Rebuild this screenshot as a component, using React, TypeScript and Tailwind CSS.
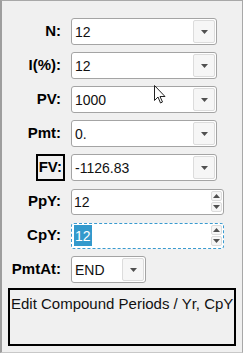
import type { ReactNode } from 'react'

const FONT = { fontFamily: '"Liberation Sans", Arial, sans-serif' }

function Arrow({ up = false }: { up?: boolean }) {
  return (
    <svg width="7" height="4" viewBox="0 0 7 4" className={up ? 'rotate-180' : ''}>
      <path d="M0 0h7L3.5 4z" fill="#505050" />
    </svg>
  )
}

function Combo({ value, width = 'w-[146px]' }: { value: string; width?: string }) {
  return (
    <div
      className={`${width} h-[27px] flex items-center bg-white border border-[#a4a4a4] rounded-[3px] pl-[3px] pr-[1px]`}
    >
      <span className="flex-1 text-[14px] text-[#111] leading-none">{value}</span>
      <div className="w-[22px] h-[23px] flex items-center justify-center bg-[#f6f6f6] border border-[#dcdcdc] rounded-[2px]">
        <Arrow />
      </div>
    </div>
  )
}

function Spinner({ children, focused = false }: { children: ReactNode; focused?: boolean }) {
  return (
    <div
      className={`w-[153px] h-[26px] flex items-center bg-white rounded-[3px] pl-[2px] pr-[1px] ${
        focused ? 'border border-dashed border-[#3a9bd0]' : 'border border-[#a4a4a4]'
      }`}
    >
      <span className="flex-1 text-[14px] text-[#111] leading-none flex items-center h-full">{children}</span>
      <div className="flex flex-col gap-[1px]">
        <div className="w-[11px] h-[10px] flex items-center justify-center bg-[#f6f6f6] border border-[#dcdcdc] rounded-[2px]">
          <Arrow up />
        </div>
        <div className="w-[11px] h-[10px] flex items-center justify-center bg-[#f6f6f6] border border-[#dcdcdc] rounded-[2px]">
          <Arrow />
        </div>
      </div>
    </div>
  )
}

function Row({ label, boxed = false, children }: { label: string; boxed?: boolean; children: ReactNode }) {
  return (
    <div className="flex items-center h-[27px]">
      <div className="w-[65px] flex justify-end">
        {boxed ? (
          <span className="border-2 border-black px-[1px] h-[27px] flex items-center text-[15px] font-bold text-black">
            {label}
          </span>
        ) : (
          <span className="pr-[4px] text-[15px] font-bold text-black">{label}</span>
        )}
      </div>
      <div className="ml-[6px]">{children}</div>
    </div>
  )
}

export default function App() {
  return (
    <div
      style={FONT}
      className="relative w-[243px] h-[353px] bg-[#f0f0f0] border-l-2 border-t border-r border-b border-l-[#9e9e9e] border-t-[#a8a8a8] border-r-[#a8a8a8] border-b-[#c8c8c8] overflow-hidden"
    >
      <div className="flex flex-col gap-[7px] pt-[17px] -ml-[2px]">
        <Row label="N:">
          <Combo value="12" />
        </Row>
        <Row label="I(%):">
          <Combo value="12" />
        </Row>
        <Row label="PV:">
          <Combo value="1000" />
        </Row>
        <Row label="Pmt:">
          <Combo value="0." />
        </Row>
        <Row label="FV:" boxed>
          <Combo value="-1126.83" />
        </Row>
        <Row label="PpY:">
          <Spinner>12</Spinner>
        </Row>
        <Row label="CpY:">
          <Spinner focused>
            <span className="bg-[#3399cc] text-white h-[21px] px-[1px] flex items-center">12</span>
          </Spinner>
        </Row>
        <Row label="PmtAt:">
          <Combo value="END" width="w-[75px]" />
        </Row>
      </div>

      <div className="mx-[6px] mt-[5px] h-[58px] border-2 border-black px-[1px] pt-[6px] text-[15px] text-[#111] leading-none whitespace-nowrap overflow-hidden">
        Edit Compound Periods / Yr, CpY
      </div>

      {/* mouse pointer */}
      <svg className="absolute left-[152px] top-[84px]" width="13" height="19" viewBox="0 0 13 19">
        <path d="M0.5 0.5v15l3.5-3.5 2.5 6 2-1-2.5-5.5h5z" fill="white" stroke="#222" strokeWidth="1" />
      </svg>
    </div>
  )
}
